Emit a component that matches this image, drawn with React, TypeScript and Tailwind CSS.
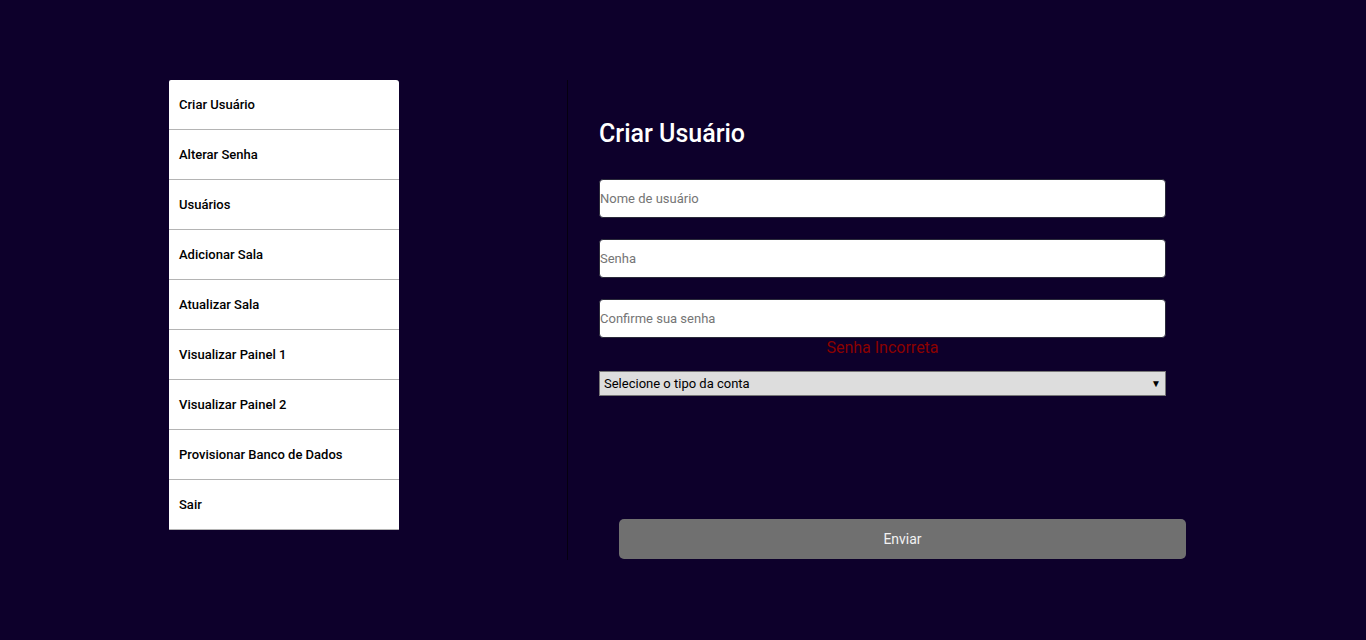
import React from "react";

const menu = [
  "Criar Usuário",
  "Alterar Senha",
  "Usuários",
  "Adicionar Sala",
  "Atualizar Sala",
  "Visualizar Painel 1",
  "Visualizar Painel 2",
  "Provisionar Banco de Dados",
  "Sair",
];

export default function App() {
  return (
    <div className="h-[640px] w-full bg-[#0d002b] font-['Roboto',sans-serif] flex pt-[80px]">
      {/* Sidebar */}
      <div className="w-[567px] shrink-0 pl-[169px]">
        <ul className="w-[230px] bg-white rounded-tr-[3px] rounded-tl-[2px]">
          {menu.map((item) => (
            <li
              key={item}
              className="h-[50px] flex items-center pl-[10px] text-[13px] font-medium text-black border-b border-[#b4b4b4]"
            >
              {item}
            </li>
          ))}
        </ul>
      </div>

      {/* Form */}
      <div className="h-[480px] border-l border-[#050010] pl-[31px] flex flex-col">
        <h1 className="mt-[37px] text-[25px] leading-[34px] font-medium text-white">Criar Usuário</h1>

        <div className="mt-[28px] flex flex-col gap-[21px] w-[567px]">
          <input
            className="h-[39px] w-full bg-white rounded-[4px] border border-[#2a2a3a] text-[13px] text-black placeholder:text-[#757575] outline-none px-0"
            placeholder="Nome de usuário"
          />
          <input
            type="password"
            className="h-[39px] w-full bg-white rounded-[4px] border border-[#2a2a3a] text-[13px] text-black placeholder:text-[#757575] outline-none px-0"
            placeholder="Senha"
          />
          <input
            type="password"
            className="h-[39px] w-full bg-white rounded-[4px] border border-[#2a2a3a] text-[13px] text-black placeholder:text-[#757575] outline-none px-0"
            placeholder="Confirme sua senha"
          />
        </div>

        <p className="w-[567px] text-center text-[16px] leading-[20px] text-[#8b0000]">Senha Incorreta</p>

        <div className="mt-[13px] w-[567px] h-[25px] bg-[#dddddd] border border-[#767676] flex items-center justify-between pl-[4px] pr-[4px]">
          <span className="text-[13px] text-black">Selecione o tipo da conta</span>
          <span className="text-[10px] text-black leading-none">▼</span>
        </div>

        <button className="mt-[123px] ml-[20px] w-[567px] h-[40px] rounded-[5px] bg-[#707070] text-[14px] text-[#f2f2f2]">
          Enviar
        </button>
      </div>
    </div>
  );
}
